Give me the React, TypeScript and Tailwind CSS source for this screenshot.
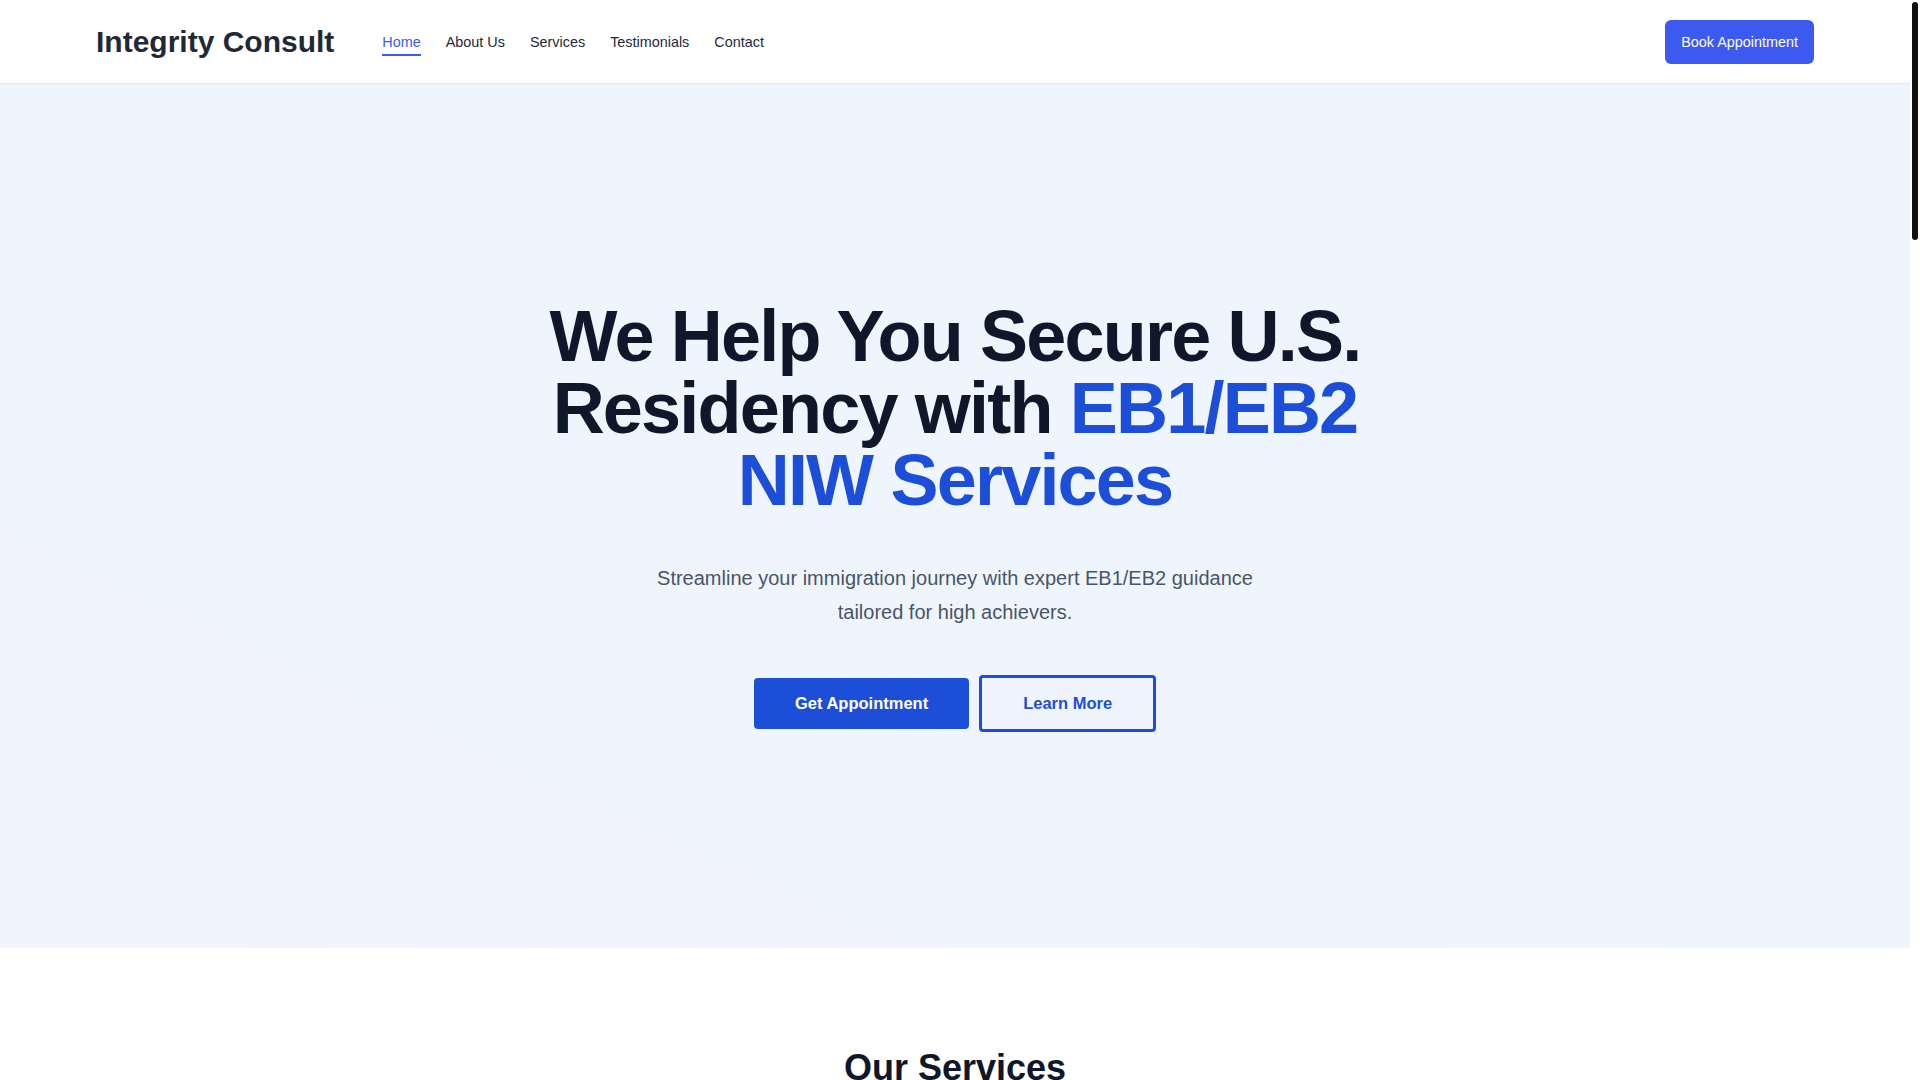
const navLinks = ['Home', 'About Us', 'Services', 'Testimonials', 'Contact'];

const Header = () => {
  return (
    <header className="bg-white border-b border-[#e5e7eb]">
      <div className="h-[83px] flex items-center justify-between px-24">
        <div className="flex items-center">
          <span className="text-[30px] leading-9 font-bold text-[#1f2937]">Integrity Consult</span>
          <nav className="ml-12 flex items-center gap-[25px]">
            {navLinks.map((link, i) => (
              <a
                key={link}
                href="#"
                className={`relative text-[14.4px] leading-5 ${i === 0 ? 'text-[#3b5bf0]' : 'text-[#1f2937]'}`}
              >
                {link}
                {i === 0 && <span className="absolute left-0 right-0 -bottom-[4px] h-[2px] bg-[#3b5bf0]" />}
              </a>
            ))}
          </nav>
        </div>
        <button className="bg-[#3c5af0] text-white text-[14.4px] leading-5 px-4 py-3 rounded-md">
          Book Appointment
        </button>
      </div>
    </header>
  );
};

const Hero = () => {
  return (
    <section className="h-[864px] flex items-center justify-center bg-gradient-to-tr from-[#f1f4f9] via-[#eff5fd] to-[#eef5ff] px-6">
      <div className="text-center">
        <h1 className="max-w-4xl mx-auto text-[72px] leading-none font-bold tracking-tight text-[#0f172a]">
          We Help You Secure U.S. Residency with <span className="text-[#1d4ed8]">EB1/EB2 NIW Services</span>
        </h1>
        <p className="mt-[45px] max-w-[620px] mx-auto text-[20px] leading-[34px] text-[#475569]">
          Streamline your immigration journey with expert EB1/EB2 guidance tailored for high achievers.
        </p>
        <div className="mt-[46px] flex items-center justify-center gap-[10px]">
          <button className="bg-[#1d4ed8] text-white font-bold text-[16.5px] leading-[25px] px-[41px] py-[13px] rounded">
            Get Appointment
          </button>
          <button className="border-[3px] border-[#1d4ed8] text-[#1d4ed8] font-bold text-[16.5px] leading-[25px] px-[41px] py-[13px] rounded">
            Learn More
          </button>
        </div>
      </div>
    </section>
  );
};

const Services = () => {
  return (
    <section className="bg-white pt-[100px] pb-24 px-24">
      <h2 className="text-4xl font-bold text-center text-[#0f172a]">Our Services</h2>
    </section>
  );
};

// page scrollbar as drawn in the screenshot
const ScrollTrack = () => {
  return (
    <div className="w-[10px] shrink-0 bg-white">
      <div className="mt-[2px] ml-[2px] w-[6px] h-[238px] rounded-full bg-[#111111]" />
    </div>
  );
};

export default function App() {
  return (
    <div className="flex h-screen overflow-hidden bg-white font-['Liberation_Sans',Arial,sans-serif]">
      <main className="flex-1 min-w-0 overflow-hidden">
        <Header />
        <Hero />
        <Services />
      </main>
      <ScrollTrack />
    </div>
  );
}
